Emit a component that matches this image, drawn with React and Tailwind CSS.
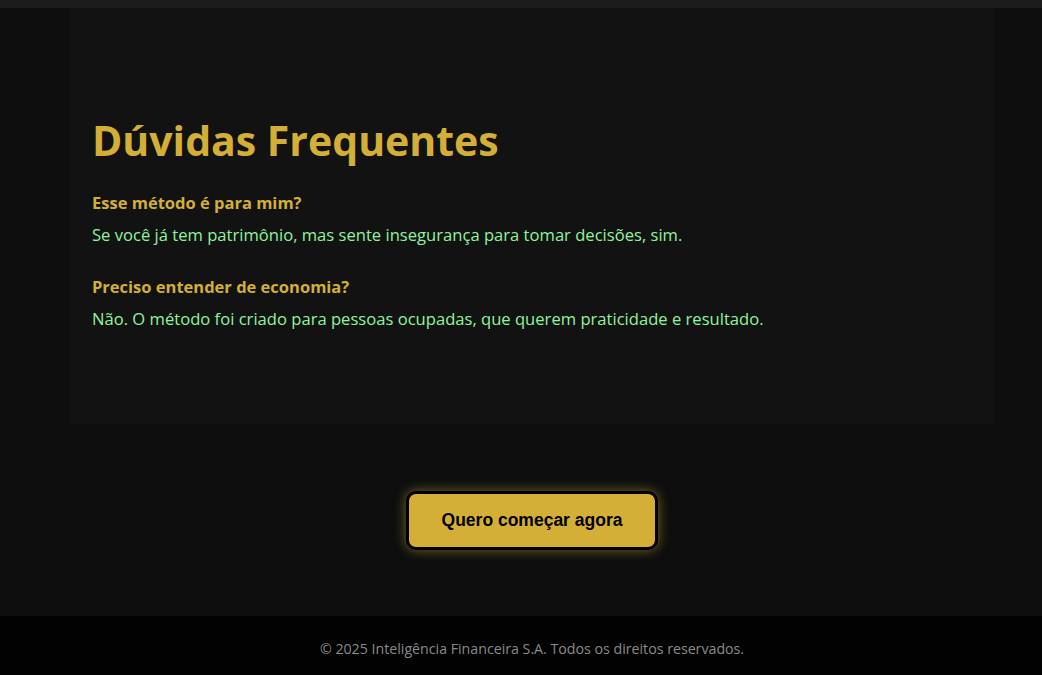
export default function App() {
  return (
    <div className="min-h-screen overflow-hidden bg-[#0e0e0e] font-['Open_Sans',sans-serif]">
      <div className="h-2 w-[1064px] bg-[#1c1c1c]" />

      <main className="w-[1064px]">
        <section className="mx-[70px] h-[416px] bg-[#121212] px-[22px] pt-[100px]">
          <h1 className="text-[41px] font-bold leading-[64px] text-[#d4af37]">Dúvidas Frequentes</h1>

          <div className="mt-[20px]">
            <h3 className="text-[16.5px] font-bold leading-[22px] text-[#d4af37]">Esse método é para mim?</h3>
            <p className="mt-[10px] text-[16.6px] leading-[22px] text-[#8ef59e]">
              Se você já tem patrimônio, mas sente insegurança para tomar decisões, sim.
            </p>
          </div>

          <div className="mt-[30px]">
            <h3 className="text-[16.5px] font-bold leading-[22px] text-[#d4af37]">Preciso entender de economia?</h3>
            <p className="mt-[10px] text-[16.6px] leading-[22px] text-[#8ef59e]">
              Não. O método foi criado para pessoas ocupadas, que querem praticidade e resultado.
            </p>
          </div>
        </section>

        <div className="flex h-[192px] items-center justify-center">
          <button className="h-[59px] w-[252px] rounded-[10px] border-[3px] border-black bg-[#d4af37] font-['Liberation_Sans',Arial,sans-serif] text-[17.5px] font-bold text-black shadow-[0_0_12px_rgba(212,175,55,0.55)]">
            Quero começar agora
          </button>
        </div>

        <footer className="flex h-[59px] items-center justify-center bg-[#020202] pt-[6px] text-[14.2px] text-[#8a8a8a]">
          © 2025 Inteligência Financeira S.A. Todos os direitos reservados.
        </footer>
      </main>
    </div>
  );
}
